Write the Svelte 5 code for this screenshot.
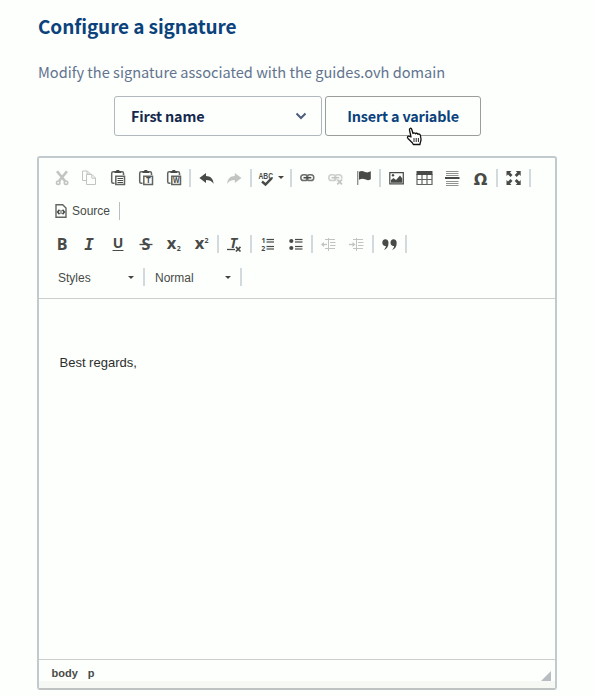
<script>
  const rows = [
    ['cut', 'copy', 'paste', 'pasteText', 'pasteWord', '|', 'undo', 'redo', '|', 'spell', '|', 'link', 'unlink', 'flag', '|', 'image', 'table', 'rule', 'omega', '|', 'maximize', '|'],
    ['source', '|'],
    ['bold', 'italic', 'underline', 'strike', 'sub', 'sup', '|', 'clear', '|', 'numbers', 'bullets', '|', 'outdent', 'indent', '|', 'quote', '|'],
    ['Styles', '|', 'Normal', '|'],
  ];
  const disabled = new Set(['cut', 'copy', 'redo', 'unlink', 'outdent', 'indent']);
  const lineRows = [4.5, 7, 11.5, 14];
</script>

{#snippet icon(name)}
  <svg class="icon" class:disabled={disabled.has(name)} viewBox="0 0 18 18" width="18" height="18" fill="none" stroke="currentColor">
    {#if name === 'cut'}
      <path d="M4 2.2 12 12M14 2.2 6 12" stroke-width="2.6" />
      <circle cx="5.2" cy="13.7" r="1.7" stroke-width="1.6" /><circle cx="13" cy="13.7" r="1.7" stroke-width="1.6" />
    {:else if name === 'copy'}
      <path d="M5 11.5H1.5v-9.5h5l3 3M6 2v3h3" />
      <path d="M5.5 5.5h5.5l3.5 3.5v6.5h-9zM10.8 5.5v3.7h3.7" />
    {:else if name.startsWith('paste')}
      <g opacity=".85">
        <path d="M5.5 14.3H4.2Q2.7 14.3 2.7 12.8V4.2Q2.7 2.8 4.2 2.8H13Q14.5 2.8 14.5 4.2V6" stroke-width="1.5" />
        <path d="M6.8 7.3h8.7v8.2H6.8z" stroke-width="1.5" />
      </g>
      <path d="M5.5 4V2.3h1.8V1h3v1.3h1.9V4z" fill="currentColor" stroke="none" />
      {#if name === 'paste'}
        <path d="M8.5 9.500h5.500M8.500 11.500h5.500M8.500 13.500h5.500" />
      {:else if name === 'pasteText'}
        <text x="11.200" y="14.200" class="tiny">T</text>
      {:else}
        <text x="11.200" y="14.200" class="tiny" textLength="6.500" lengthAdjust="spacingAndGlyphs">W</text>
      {/if}
    {:else if name === 'undo' || name === 'redo'}
      <path transform={name === 'redo' ? 'matrix(-1 0 0 1 18.8 0)' : undefined} d="M2.4 9 9 4v3.100C13.500 7.200 16 9.600 16.700 14.800 14.600 11.800 12.300 11 9 11v3z" fill="currentColor" stroke="none" />
    {:else if name === 'link' || name === 'unlink'}
      <g opacity=".8">
        <rect x="2.800" y="5.800" width="7" height="5.800" rx="2.900" stroke-width="1.500" />
        <rect x="8.800" y="5.800" width="7" height="5.800" rx="2.900" stroke-width="1.500" />
      </g>
      <path d="M5.500 8.700h7.800" stroke-width="1.600" />
      {#if name === 'unlink'}
        <path class="halo" d="m11 10.200 5.300 5.300M16.300 10.200 11 15.500" />
        <path d="m11.300 10.500 4.700 4.900M16 10.500l-4.700 4.900" stroke-width="1.700" />
      {/if}
    {:else if name === 'flag'}
      <path d="M3.700 2v14" stroke-width="1.400" opacity=".6" />
      <path d="M5 2.800C7.500 1.500 9 2.200 11 3s3.500.500 5.800-.700V10.300C14.500 11.500 13 11.300 11 10.300S7.500 9.500 5 10.800z" fill="currentColor" stroke="none" />
    {:else if name === 'image'}
      <path d="M2.800 3.600h13.500v11.200H2.800z" stroke-width="1.200" />
      <path d="M4 13.800V11l2.500-2L9 11l4-4.500 2.300 3v4.300z" fill="currentColor" stroke="none" />
      <circle cx="6" cy="6.300" r="1.200" fill="currentColor" stroke="none" />
    {:else if name === 'table'}
      <path d="M1.500 2h16v4h-16z" fill="currentColor" stroke="none" />
      <path d="M2 5v10.500h15V5M7 6v9.500M12 6v9.500M2 10.500h15" stroke-width="1.200" opacity=".85" />
    {:else if name === 'rule'}
      <path d="M3 2.500h12.500M3 4.500h12.500M3 6.500h12.500M3 12.500h12.500M3 14.500h12.500M3 16.500h12.500" opacity=".6" />
      <path d="M2 9h14.500" stroke-width="2" />
    {:else if name === 'omega'}
      <text x="9.500" y="15.500" class="omega">Ω</text>
    {:else if name === 'maximize'}
      <path d="M2.500 2h5L6 3.500 8.500 6 6.500 8 4 5.500 2.500 7zM16.700 2h-5l1.500 1.500L10.700 6l2 2 2.500-2.500L16.700 7zM2.500 16h5L6 14.500 8.500 12l-2-2L4 12.500 2.500 11zM16.700 16h-5l1.500-1.500-2.500-2.500 2-2 2.500 2.500 1.500-1.500z" fill="currentColor" stroke="none" />
    {:else if name === 'bold'}
      <text x="9" y="15" class="glyph">B</text>
    {:else if name === 'italic'}
      <text x="8" y="15" class="glyph slab">I</text>
    {:else if name === 'underline'}
      <text x="9" y="13" class="glyph small">U</text><path d="M3.500 15.500h11" />
    {:else if name === 'strike'}
      <text x="9" y="15" class="glyph">S</text><path d="M2.500 9.500h13" stroke-width="1.300" />
    {:else if name === 'sub'}
      <text x="6.500" y="14" class="glyph" textLength="9.500" lengthAdjust="spacingAndGlyphs">x</text><text x="13.700" y="16" class="index">2</text>
    {:else if name === 'sup'}
      <text x="6.500" y="14" class="glyph" textLength="9.500" lengthAdjust="spacingAndGlyphs">x</text><text x="13.500" y="7.500" class="index">2</text>
    {:else if name === 'clear'}
      <text x="8.500" y="13" class="glyph small slant">T</text><path d="M2 14.500h8" stroke-width="1.300" />
      <path d="m10.900 11.800 4.600 4.700M15.500 11.800l-4.600 4.700" stroke-width="1.700" />
    {:else if name === 'numbers'}
      <text x="5.500" y="8" class="index">1</text><text x="5.300" y="15.800" class="index">2</text>
      {#each lineRows as y}<path d="M8.500 {y}h7.500" stroke-width="1.200" />{/each}
    {:else if name === 'bullets'}
      <circle cx="5.300" cy="6" r="2.100" fill="currentColor" stroke="none" /><circle cx="5.300" cy="13" r="2.100" fill="currentColor" stroke="none" />
      {#each lineRows as y}<path d="M9 {y}h7.500" stroke-width="1.200" />{/each}
    {:else if name === 'outdent' || name === 'indent'}
      <path d="M9.500 3v13M6 4.500h10M11 7.500h5.500M11 10.500h5.500M6 13.500h10" />
      <path d={name === 'outdent' ? 'M3 9.500h5' : 'M2 9.500h4'} stroke-width="1.300" />
      <path d={name === 'outdent' ? 'm2 9.500 3-2.500v5z' : 'M8.500 9.500l-3-2.500v5z'} fill="currentColor" stroke="none" />
    {:else if name === 'quote'}
      <path d="M5.300 4.300c2 0 3.200 1.400 3.200 3.600 0 3.500-1.600 6-4.700 7 1.300-1.400 2-2.700 2.100-4C3.700 11.200 2.300 9.700 2.300 7.700 2.300 5.700 3.500 4.300 5.300 4.300zM13.500 4.300c2 0 3.200 1.400 3.200 3.600 0 3.500-1.600 6-4.700 7 1.300-1.400 2-2.700 2.100-4-2.200.3-3.600-1.200-3.600-3.200 0-2 1.200-3.400 3-3.400z" fill="currentColor" stroke="none" />
    {/if}
  </svg>
{/snippet}

<main>
  <h1>Configure a signature</h1>
  <p class="lead">Modify the signature associated with the guides.ovh domain</p>
  <div class="controls">
    <button class="select">
      <span class="first">First name</span>
      <svg width="12" height="8" viewBox="0 0 12 8" fill="none" stroke="#4d5e7c" stroke-width="2"><path d="m1.500 1.500 4.500 4.500 4.500-4.500" /></svg>
    </button>
    <button class="insert"><span class="variable">Insert a variable</span>
      <svg class="cursor" width="17" height="19" viewBox="0 0 17 19"><path d="M5 10 3.500 3.200C3 1 5.200.500 5.800 2.500L7 6.500c.3-1 2-1 2.500.3.500-.9 2-.7 2.400.5.900-.7 2.300 0 2.500 1.200l.6 3.500c.2 1.500-.5 2.700-.8 4l-.3 1.500H7.300L6.500 16 2 11.500c-1.500-1.700.3-3 1.600-2z" fill="#fff" stroke="#111" stroke-width="1.300" stroke-linejoin="round" /><path d="M8 11v4M10.200 11v4M12.400 11v4" stroke="#222" /></svg>
    </button>
  </div>

  <section class="editor">
    <div class="toolbar">
      {#each rows as row, r}
        <div class="row" class:lists={r === 3}>
          {#each row as item}
            {#if item === '|'}
              <i class="sep"></i>
            {:else if item === 'Styles' || item === 'Normal'}
              <button class="combo"><span>{item}</span><b class="caret"></b></button>
            {:else if item === 'source'}
              <button class="source">
                <svg width="12" height="14" viewBox="0 0 12 14" fill="none" stroke="currentColor"><path d="M1 .700h6.700l3.300 3.300v9.300H1z" stroke-width="1.400" opacity=".85" /><path d="M4.500 5.800 2.700 8l1.800 2.200M7.500 5.800l1.800 2.200-1.800 2.200" stroke-width="1.700" /><path d="M6 6v4" /></svg>
                <span>Source</span>
              </button>
            {:else if item === 'spell'}
              <button class="spell">
                <svg class="icon" width="20" height="18" viewBox="0 0 20 18"><text x=".5" y="9.500" class="abc" textLength="14.5" lengthAdjust="spacingAndGlyphs">ABC</text><path d="m4 12.500 3.500 3L14 8.800" fill="none" stroke="currentColor" stroke-width="2.400" /></svg>
                <b class="caret"></b>
              </button>
            {:else}
              <button class="tool" aria-label={item}>{@render icon(item)}</button>
            {/if}
          {/each}
        </div>
      {/each}
    </div>
    <div class="content"><p>Best regards,</p></div>
    <footer><span>body</span><span>p</span><i class="resize"></i></footer>
  </section>
</main>

<style>
  :global(body) { background: #fcfffc; }
  main { box-sizing: border-box; width: 595px; height: 696px; padding: 11px 37px 0; overflow: hidden; font-family: "Noto Sans CJK SC", "Open Sans", sans-serif; background: #fcfffc; }
  h1 { margin: 0 0 0 1px; height: 30px; line-height: 30px; font-size: 19px; letter-spacing: -.1px; font-weight: 700; color: #0b427c; white-space: nowrap; }
  .lead { margin: 17px 0 0 1px; height: 28px; line-height: 28px; font-size: 14.6px; color: #63738f; white-space: nowrap; }
  button { padding: 0; border: 0; background: none; font: inherit; color: inherit; }
  .controls { display: flex; gap: 3px; margin: 10px 0 0 77px; height: 40px; }
  .controls button { box-sizing: border-box; display: flex; align-items: center; height: 40px; border: 1px solid #b1b7bd; border-radius: 3px; font-size: 14.4px; letter-spacing: -.17px; font-weight: 700; white-space: nowrap; }
  .controls .select { width: 208px; justify-content: space-between; padding: 0 14px 0 16px; color: #14294d; }
  .first, .variable { position: relative; top: -1px; }
  .controls .insert { position: relative; width: 156px; justify-content: center; border-color: #999e9d; color: #0b427c; }
  .cursor { position: absolute; left: 80px; top: 30px; }
  .editor { box-sizing: border-box; display: flex; flex-direction: column; width: 520px; height: 534px; margin-top: 20px; border: 2px solid #c3cace; border-bottom-color: #bec2c1; border-radius: 3px; font-family: "Liberation Sans", sans-serif; }
  .toolbar { box-sizing: border-box; height: 141px; padding: 3px 0 0 9px; border-bottom: 1px solid #cbcfcd; color: #484a48; }
  .row { display: flex; align-items: center; height: 33px; }
  .row.lists { height: 34px; }
  .row.lists .combo { padding-top: 1px; }
  .tool { display: flex; justify-content: center; align-items: center; width: 28px; height: 28px; }
  .icon { display: block; overflow: visible; }
  .disabled { opacity: .32; }
  .sep { width: 2px; height: 18px; margin: 0 1px 0 2px; background: #d2dade; }
  .tool + .sep:nth-child(6), .tool + .sep:nth-child(7) { margin-left: 1px; }
  .source { display: flex; align-items: center; gap: 5px; width: 69px; padding-left: 7px; font-size: 12px; }
  .source + .sep { width: 1px; background: #b9bfc0; }
  .spell { display: flex; align-items: center; width: 35px; padding-left: 5px; box-sizing: border-box; }
  .caret { width: 0; height: 0; border: 3px solid transparent; border-top-color: #444; border-bottom: 0; }
  .combo { box-sizing: border-box; display: flex; justify-content: space-between; align-items: center; width: 93px; padding: 0 7px 0 10px; font-size: 12px; }
  .sep + .combo { width: 92px; padding-left: 9px; }
  text { fill: currentColor; stroke: none; text-anchor: middle; font-family: "Open Sans", sans-serif; font-weight: 700; }
  .glyph { font-size: 16px; }
  .glyph.small { font-size: 14px; }
  .slab { font-family: "DejaVu Sans Mono", monospace; font-style: italic; }
  .slant { font-style: italic; }
  .index { font-size: 7px; }
  .tiny { font-size: 8px; }
  .omega { font-family: "DejaVu Sans", sans-serif; font-size: 16px; }
  .abc { font-family: "Liberation Sans", sans-serif; font-size: 9.5px; text-anchor: start; }
  .halo { stroke: #fcfffc; stroke-width: 3px; }
  .content { flex: 1; padding: 56px 20.500px 0; color: #2c2e2d; }
  .content p { margin: 0; font-size: 13px; line-height: 16px; }
  footer { position: relative; box-sizing: border-box; display: flex; gap: 10px; height: 29px; padding: 6px 0 0 12.500px; border-top: 1px solid #cbcfcd; border-bottom: 7px solid #f6f8f3; font-size: 11px; line-height: 14px; font-weight: 700; color: #484a48; }
  .resize { position: absolute; right: 4px; bottom: 0; border-left: 10px solid transparent; border-bottom: 10px solid #b8bdc1; }
</style>
